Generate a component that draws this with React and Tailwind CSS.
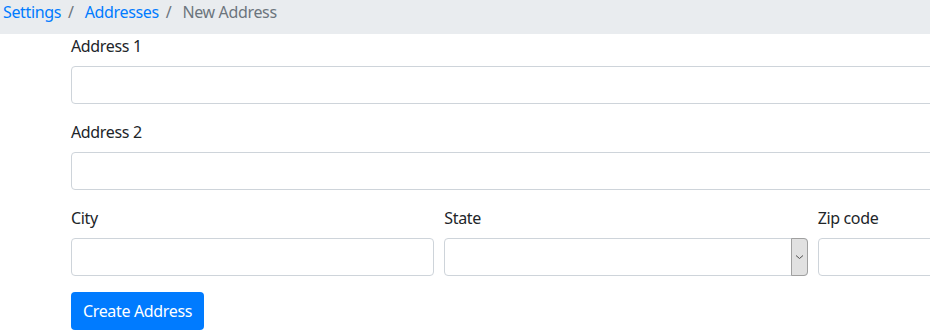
import React from 'react';

const FONT = { fontFamily: '"Segoe UI", "Noto Sans", "Liberation Sans", sans-serif' };

function Field({ label, children }) {
  return (
    <div className="mb-4">
      <label className="block mb-2 text-base leading-6 text-[#212529]">{label}</label>
      {children}
    </div>
  );
}

function TextInput() {
  return (
    <input type="text"
      className="block w-full h-[38px] rounded-[4px] border border-[#ced4da] bg-white px-3 text-base outline-none" />
  );
}

function StateSelect() {
  return (
    <div className="flex h-[38px] w-full items-stretch rounded-[4px] border border-[#ced4da] bg-white">
      <div className="flex-1" />
      <div className="my-[-1px] mr-[-1px] flex w-[17px] items-center justify-center rounded-r-[4px] border border-[#a0a0a0] bg-[#e1e1e1]">
        <svg width="9" height="6" viewBox="0 0 9 6" fill="none">
          <path d="M1 1.5l3.5 3 3.5-3" stroke="#505050" strokeWidth="1" />
        </svg>
      </div>
    </div>
  );
}

export default function App() {
  return (
    <div className="h-[336px] w-[930px] overflow-hidden bg-white text-[#212529] tracking-[-0.35px]" style={FONT}>
      {/* Breadcrumb */}
      <nav className="h-[34px] bg-[#e9ecef] px-[3px]">
        <ol className="flex items-center text-base leading-6">
          <li><a className="text-[#007bff]">Settings</a></li>
          <li className="pl-[7px] pr-[11px] text-[#6c757d]">/</li>
          <li><a className="text-[#007bff]">Addresses</a></li>
          <li className="pl-[7px] pr-[11px] text-[#6c757d]">/</li>
          <li className="text-[#6c757d]">New Address</li>
        </ol>
      </nav>

      {/* Form */}
      <form className="w-[1110px] ml-[71px]">
        <Field label="Address 1"><TextInput /></Field>
        <Field label="Address 2"><TextInput /></Field>
        <div className="grid grid-cols-3 gap-x-[10px]">
          <Field label="City"><TextInput /></Field>
          <Field label="State"><StateSelect /></Field>
          <Field label="Zip code"><TextInput /></Field>
        </div>
        <button type="button"
          className="h-[38px] rounded-[4px] bg-[#007bff] px-3 text-base leading-6 text-white">
          Create Address
        </button>
      </form>
    </div>
  );
}
